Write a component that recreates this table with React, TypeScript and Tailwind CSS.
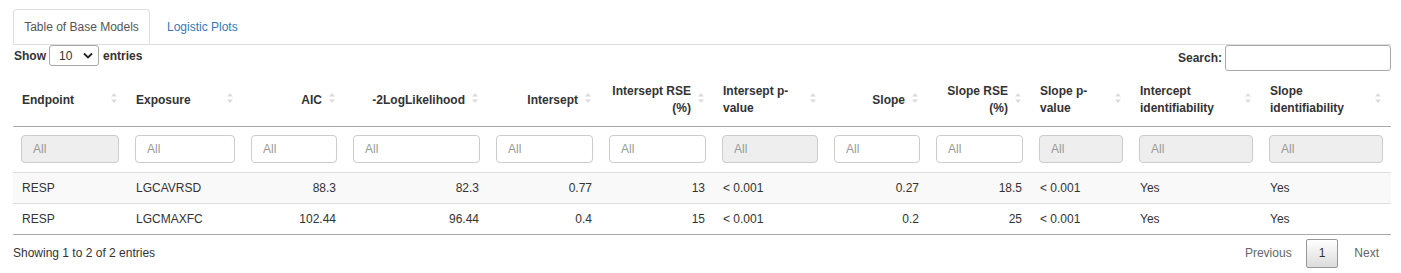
import React from "react";

const columns = [
    { key: "endpoint", label: ["Endpoint"], width: 114, align: "left", disabled: true },
    { key: "exposure", label: ["Exposure"], width: 116, align: "left", disabled: false },
    { key: "aic", label: ["AIC"], width: 102, align: "right", disabled: false },
    { key: "ll", label: ["-2LogLikelihood"], width: 143, align: "right", disabled: false },
    { key: "int", label: ["Intersept"], width: 113, align: "right", disabled: false },
    { key: "intRse", label: ["Intersept RSE", "(%)"], width: 113, align: "right", disabled: false },
    { key: "intP", label: ["Intersept p-", "value"], width: 112, align: "left", disabled: true },
    { key: "slope", label: ["Slope"], width: 102, align: "right", disabled: false },
    { key: "slopeRse", label: ["Slope RSE", "(%)"], width: 103, align: "right", disabled: false },
    { key: "slopeP", label: ["Slope p-", "value"], width: 100, align: "left", disabled: true },
    { key: "intId", label: ["Intercept", "identifiability"], width: 130, align: "left", disabled: true },
    { key: "slopeId", label: ["Slope", "identifiability"], width: 130, align: "left", disabled: true },
];

const rows = [
    ["RESP", "LGCAVRSD", "88.3", "82.3", "0.77", "13", "< 0.001", "0.27", "18.5", "< 0.001", "Yes", "Yes"],
    ["RESP", "LGCMAXFC", "102.44", "96.44", "0.4", "15", "< 0.001", "0.2", "25", "< 0.001", "Yes", "Yes"],
];

const SortIcon = () => (
    <svg width="6" height="11" viewBox="0 0 6 11" className="absolute right-[10px] top-1/2 -translate-y-1/2">
        <polygon points="0,4 3,0.5 6,4" fill="#dcdcdc" />
        <polygon points="0,7 3,10.5 6,7" fill="#dcdcdc" />
    </svg>
);

const App = () => {
    return (
        <div className="w-[1401px] h-[273px] bg-white pl-[13px] pr-[10px] font-['Liberation_Sans',Arial,sans-serif] text-[12px] text-[#333]">
            {/* tabs */}
            <div className="flex mt-[9px] border-b border-[#ddd]">
                <div className="w-[137px] h-[35px] -mb-px flex items-center justify-center border border-[#ddd] border-b-white rounded-t-[4px] bg-white text-[#555]">
                    Table of Base Models
                </div>
                <div className="h-[35px] ml-[2px] px-[15px] flex items-center text-[#337ab7]">
                    Logistic Plots
                </div>
            </div>

            {/* length + search */}
            <div className="flex justify-between items-start">
                <div className="flex items-center h-[21px] font-bold">
                    <span className="mr-[3px] ml-px">Show</span>
                    <div className="w-[50px] h-[21px] border border-[#a9a9a9] rounded-[3px] flex items-center justify-between pl-[9px] pr-[5px] font-normal">
                        <span>10</span>
                        <svg width="10" height="7" viewBox="0 0 10 7">
                            <path d="M1 1.5 L5 5.5 L9 1.5" stroke="#222" strokeWidth="1.8" fill="none" />
                        </svg>
                    </div>
                    <span className="ml-[4px]">entries</span>
                </div>
                <div className="flex items-center h-[26px] font-bold">
                    <span className="mr-[3px]">Search:</span>
                    <input className="w-[166px] h-[26px] border border-[#a9a9a9] rounded-[3px] outline-none" />
                </div>
            </div>

            {/* table */}
            <table className="w-[1378px] table-fixed">
                <colgroup>
                    {columns.map(col => (
                        <col key={col.key} style={{ width: col.width }} />
                    ))}
                </colgroup>
                <thead>
                    <tr className="border-b border-[#aaa]">
                        {columns.map(col => (
                            <th
                                key={col.key}
                                className={`relative h-[55px] pl-[9px] pr-[23px] pt-[4px] align-middle font-bold leading-[17px] ${col.align === "right" ? "text-right" : "text-left"}`}
                            >
                                {col.label.map((line, i) => (
                                    <div key={i}>{line}</div>
                                ))}
                                <SortIcon />
                            </th>
                        ))}
                    </tr>
                    <tr className="border-b border-[#ddd]">
                        {columns.map(col => (
                            <td key={col.key} className="h-[46px] px-2 align-middle">
                                <input
                                    disabled={col.disabled}
                                    placeholder="All"
                                    className={`w-full h-[28px] px-[11px] border border-[#ccc] rounded-[4px] text-[12px] outline-none placeholder:text-[#999] ${col.disabled ? "bg-[#eee]" : "bg-white"}`}
                                />
                            </td>
                        ))}
                    </tr>
                </thead>
                <tbody>
                    {rows.map((row, r) => (
                        <tr key={r} className={`border-b ${r === rows.length - 1 ? "border-[#aaa]" : "border-[#ddd]"} ${r % 2 === 0 ? "bg-[#f9f9f9]" : "bg-white"}`}>
                            {row.map((cell, c) => (
                                <td
                                    key={c}
                                    className={`h-[31px] px-[9px] align-middle ${columns[c].align === "right" ? "text-right" : "text-left"}`}
                                >
                                    {cell}
                                </td>
                            ))}
                        </tr>
                    ))}
                </tbody>
            </table>

            {/* info + paging */}
            <div className="flex justify-between items-center pt-[4px]">
                <div>Showing 1 to 2 of 2 entries</div>
                <div className="flex items-center">
                    <span className="px-[12px] text-[#666]">Previous</span>
                    <span className="ml-[2px] h-[29px] px-[12px] flex items-center border border-[#979797] rounded-[2px] bg-gradient-to-b from-white to-[#dcdcdc]">
                        1
                    </span>
                    <span className="ml-[2px] pl-[14px] pr-[12px] text-[#666]">Next</span>
                </div>
            </div>
        </div>
    );
};

export default App;
